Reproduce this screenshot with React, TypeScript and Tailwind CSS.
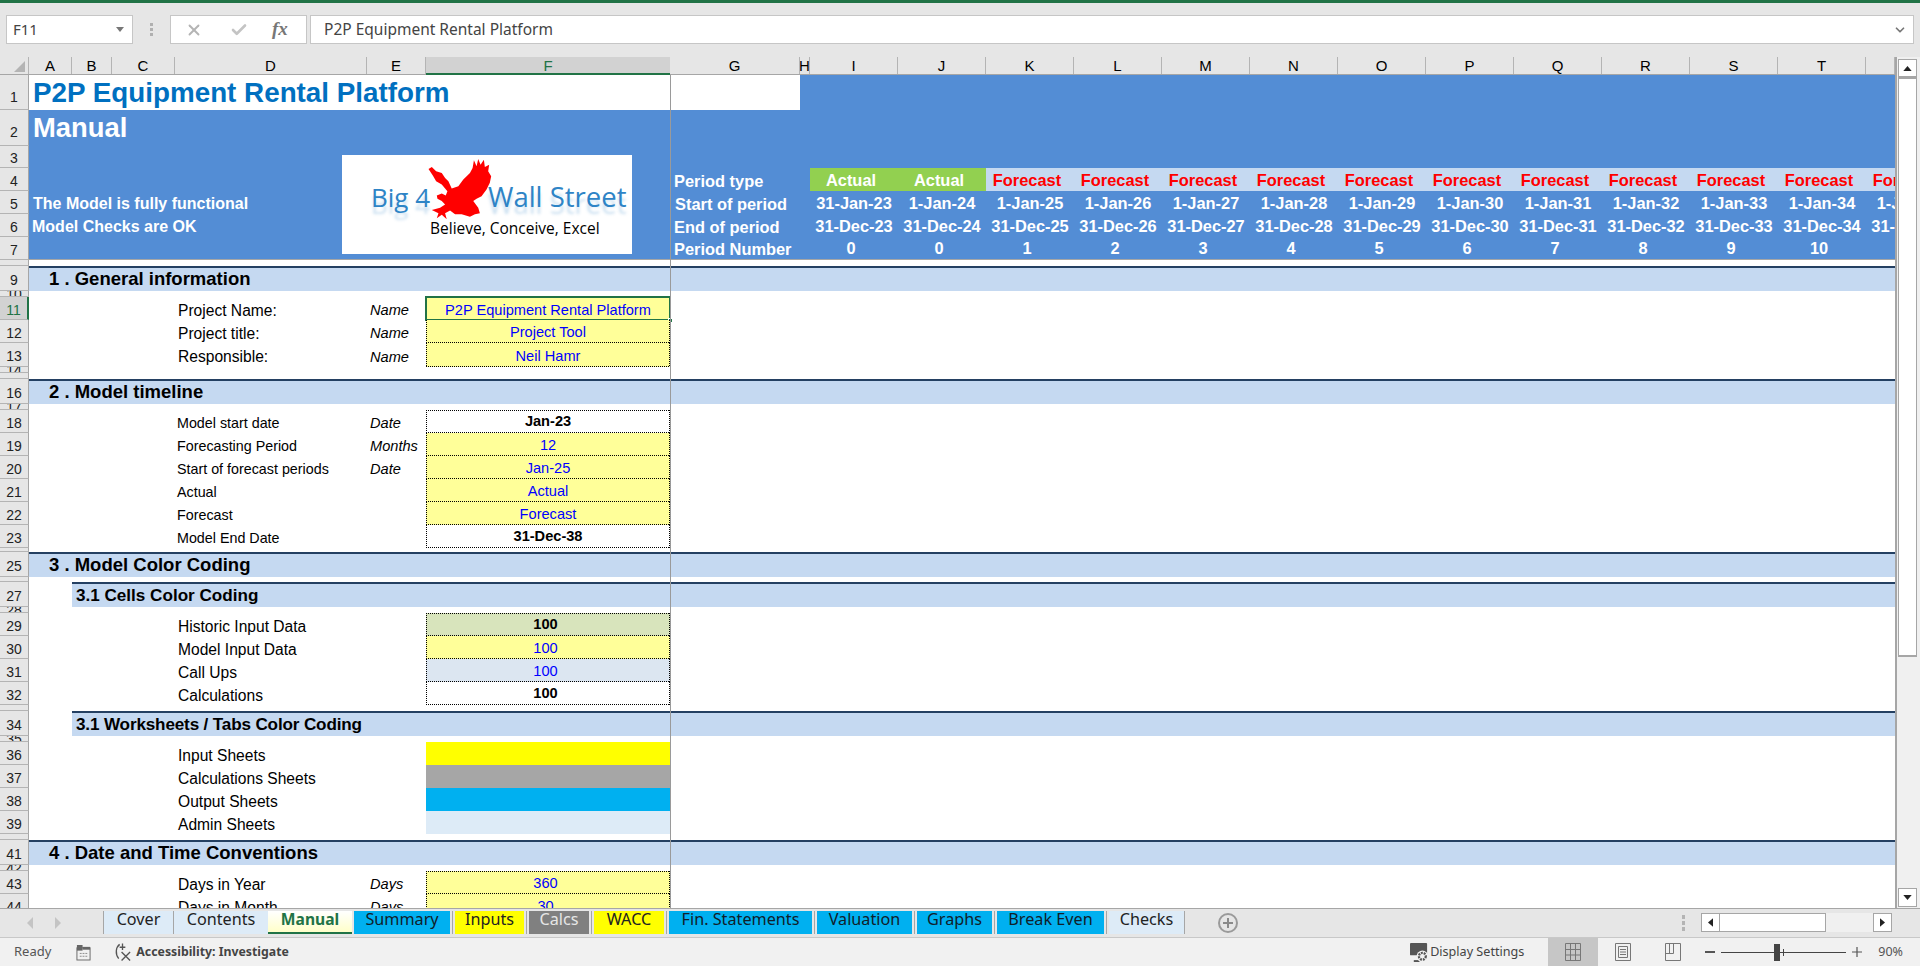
import React from "react";
import { X, Check, ChevronDown } from "lucide-react";

const COLS = "grid grid-rows-1 grid-cols-[43px_40px_63px_192px_59px_244px_130px_10px_repeat(12,88px)_29px] flex-1 min-w-0";
const ARIAL = "font-['Liberation_Sans',Arial,sans-serif]";
const UI = "font-['Noto_Sans',sans-serif]";
const HD = "absolute left-0 right-0 h-px bg-[repeating-linear-gradient(90deg,#000_0_1px,transparent_1px_2px)]";
const VD = "absolute top-0 bottom-0 w-px bg-[repeating-linear-gradient(180deg,#000_0_1px,transparent_1px_2px)]";

function RowHead({ n, sel, hide, pad }: { n: number; sel?: boolean; hide?: boolean; pad: string }) {
  return (
    <div className={`w-[29px] shrink-0 flex items-center justify-center overflow-hidden border-b border-b-[#b4b4b4] text-[14px] leading-none ${pad} ${sel ? "bg-[#d2d2d2] text-[#217346] border-r-2 border-r-[#217346]" : "bg-[#e6e6e6] text-[#222] border-r border-r-[#a6a6a6]"}`}>
      {hide ? null : n}
    </div>
  );
}

function Row({ n, h = "h-[23px]", pad = "pt-[3px]", body = "", sel, hide, children }: { n: number; h?: string; pad?: string; body?: string; sel?: boolean; hide?: boolean; children?: React.ReactNode }) {
  return (
    <div className={`flex shrink-0 ${h}`}>
      <RowHead n={n} sel={sel} hide={hide} pad={pad} />
      <div className={`${COLS} ${body}`}>{children}</div>
    </div>
  );
}

function Section({ n, text }: { n: number; text: string }) {
  return (
    <Row n={n} h="h-[25px]" pad="pt-[3px]" body="border-t-2 border-[#244062] bg-[#c5d9f1]">
      <div className="col-span-full pl-[20px] flex items-center font-bold text-[18.5px] leading-none text-black whitespace-pre">{text}</div>
    </Row>
  );
}

function SubSection({ n, text, cls = "" }: { n: number; text: string; cls?: string }) {
  return (
    <Row n={n} h="h-[25px]" pad="pt-[3px]">
      <div className={`col-start-2 -col-end-1 border-t-2 border-[#244062] bg-[#c5d9f1] pl-[4px] flex items-center font-bold text-[17.1px] leading-none text-black whitespace-nowrap ${cls}`}>{text}</div>
    </Row>
  );
}

function Label({ text, small }: { text: string; small?: boolean }) {
  return (
    <div className={`col-start-4 flex items-center pt-[4px] leading-none whitespace-nowrap text-black ${small ? "text-[14.3px] pl-[2px]" : "text-[15.6px] pl-[3px]"}`}>{text}</div>
  );
}

function Unit({ text }: { text?: string }) {
  return <div className="col-start-5 flex items-center pt-[4px] pl-[3px] italic text-[14.6px] leading-none text-black whitespace-nowrap">{text}</div>;
}

function Val({ text, cls, first }: { text?: string; cls: string; first?: boolean }) {
  return (
    <div className={`col-start-6 relative flex items-center justify-center text-[14.6px] leading-none whitespace-nowrap ${cls}`}>
      {text}
      {first ? <div className={`${HD} top-0`} /> : null}
      <div className={`${HD} bottom-0`} />
      <div className={`${VD} left-0`} />
      <div className={`${VD} right-0`} />
    </div>
  );
}

function Swatch({ cls }: { cls: string }) {
  return <div className={`col-start-6 ${cls}`} />;
}

const starts = ["31-Jan-23", "1-Jan-24", "1-Jan-25", "1-Jan-26", "1-Jan-27", "1-Jan-28", "1-Jan-29", "1-Jan-30", "1-Jan-31", "1-Jan-32", "1-Jan-33", "1-Jan-34", "1-Jan-35"];
const ends = ["31-Dec-23", "31-Dec-24", "31-Dec-25", "31-Dec-26", "31-Dec-27", "31-Dec-28", "31-Dec-29", "31-Dec-30", "31-Dec-31", "31-Dec-32", "31-Dec-33", "31-Dec-34", "31-Dec-35"];
const nums = ["0", "0", "1", "2", "3", "4", "5", "6", "7", "8", "9", "10", ""];

function PeriodCells({ values, cls, colored }: { values: string[]; cls: string; colored?: boolean }) {
  return (
    <>
      {values.map((v, i) => {
        const tone = colored ? (i < 2 ? "bg-[#92d050] text-white" : "bg-[#c5d9f1] text-[#ff0000]") : "text-white";
        return (
          <div key={i} className={`${i === 0 ? "col-start-9" : ""} overflow-hidden flex items-center pt-[1px] ${tone}`}>
            <div className={`w-[88px] shrink-0 text-center leading-none whitespace-nowrap ${cls}`}>{v}</div>
          </div>
        );
      })}
    </>
  );
}

function Eagle() {
  return (
    <svg viewBox="295 58 190 184" className="w-[64px] h-[61px] absolute left-[86px] top-[4px]">
      <polygon
        fill="#ff0000"
        points="295,88 305,82 318,95 335,100 345,115 355,125 365,147 385,140 400,120 420,100 428,85 432,62 440,80 445,58 452,75 462,60 465,82 478,75 475,95 484,110 480,130 470,150 455,170 440,178 430,185 445,205 450,222 435,225 420,232 395,225 375,225 360,213 345,222 350,240 335,226 320,237 325,222 305,212 330,205 345,195 335,185 322,178 320,168 335,162 347,168 352,155 335,135 318,125 308,108"
      />
    </svg>
  );
}

function Logo() {
  const cls = "absolute font-['Open_Sans',sans-serif] text-[#2e84c6] whitespace-nowrap leading-none [text-shadow:0_7px_3px_rgba(46,132,198,0.25)]";
  return (
    <div className="absolute left-[342px] top-[80px] w-[290px] h-[99px] bg-white z-10">
      <span className={`${cls} left-[29px] top-[29px] text-[26px]`}>Big 4</span>
      <Eagle />
      <span className={`${cls} left-[146px] top-[28px] text-[27.5px]`}>Wall Street</span>
      <span className="absolute left-[88px] top-[66px] font-['Open_Sans',sans-serif] text-[15.5px] leading-none text-black whitespace-nowrap">Believe, Conceive, Excel</span>
    </div>
  );
}

function ColHeads() {
  const items: [string, string][] = [
    ["A", "w-[43px]"], ["B", "w-[40px]"], ["C", "w-[63px]"], ["D", "w-[192px]"], ["E", "w-[59px]"], ["F", "w-[244px]"], ["G", "w-[130px]"], ["H", "w-[10px]"],
    ["I", "w-[88px]"], ["J", "w-[88px]"], ["K", "w-[88px]"], ["L", "w-[88px]"], ["M", "w-[88px]"], ["N", "w-[88px]"], ["O", "w-[88px]"], ["P", "w-[88px]"], ["Q", "w-[88px]"], ["R", "w-[88px]"], ["S", "w-[88px]"], ["T", "w-[88px]"], ["", "w-[29px]"],
  ];
  return (
    <div className="flex h-[18px] shrink-0 bg-[#e6e6e6] border-b border-b-[#a6a6a6] text-[15px] leading-none">
      <div className="w-[29px] shrink-0 relative border-r border-r-[#b4b4b4]">
        <svg viewBox="0 0 12 12" className="absolute right-[3px] bottom-[2px] w-[11px] h-[11px]"><polygon points="12,0 12,12 0,12" fill="#b4b4b4" /></svg>
      </div>
      {items.map(([l, w]) => (
        <div key={l + w} className={`${w} shrink-0 flex items-center justify-center overflow-hidden ${l === "F" ? "bg-[#d2d2d2] text-[#217346] border-b-2 border-[#217346] -mb-px" : "border-r border-r-[#b4b4b4] text-black"}`}>{l}</div>
      ))}
    </div>
  );
}

const YEL = "bg-[#ffff99] text-[#0000ff] pt-[2px]";

function Sheet() {
  return (
    <div className={`relative flex-1 min-w-0 flex flex-col overflow-hidden bg-white ${ARIAL}`}>
      <ColHeads />
      <div className="relative flex flex-col">
        <Logo />
        <Row n={1} h="h-[35px]" pad="pt-[9px]" body="bg-[#538dd5]">
          <div className="col-span-7 bg-white pl-[4px] flex items-center font-bold text-[27.8px] leading-none text-[#0070c0] whitespace-nowrap">P2P Equipment Rental Platform</div>
        </Row>
        <Row n={2} h="h-[36px]" pad="pt-[9px]" body="bg-[#538dd5]">
          <div className="col-span-7 pl-[4px] flex items-center font-bold text-[27.4px] leading-none text-white">Manual</div>
        </Row>
        <Row n={3} h="h-[22px]" body="bg-[#538dd5]" />
        <Row n={4} body="bg-[#538dd5]">
          <div className="col-start-7 pl-[4px] pt-[3px] flex items-center font-bold text-[16.4px] leading-none text-white whitespace-nowrap">Period type</div>
          <PeriodCells colored values={["Actual", "Actual", "Forecast", "Forecast", "Forecast", "Forecast", "Forecast", "Forecast", "Forecast", "Forecast", "Forecast", "Forecast", "Forecast"]} cls="pr-[6px] font-bold text-[16.4px]" />
        </Row>
        <Row n={5} body="bg-[#538dd5]">
          <div className="col-span-6 pl-[4px] pt-[3px] flex items-center font-bold text-[16px] leading-none text-white whitespace-nowrap">The Model is fully functional</div>
          <div className="col-start-7 pl-[5px] pt-[3px] flex items-center font-bold text-[16.4px] leading-none text-white whitespace-nowrap">Start of period</div>
          <PeriodCells values={starts} cls="font-bold text-[16.4px]" />
        </Row>
        <Row n={6} body="bg-[#538dd5]">
          <div className="col-span-6 pl-[3px] pt-[3px] flex items-center font-bold text-[16px] leading-none text-white whitespace-nowrap">Model Checks are OK</div>
          <div className="col-start-7 pl-[4px] pt-[3px] flex items-center font-bold text-[16.4px] leading-none text-white whitespace-nowrap">End of period</div>
          <PeriodCells values={ends} cls="font-bold text-[16.4px]" />
        </Row>
        <Row n={7} body="bg-[#538dd5] border-b border-[#a6a6a6]">
          <div className="col-start-7 pl-[4px] pt-[3px] flex items-center font-bold text-[16.4px] leading-none text-white whitespace-nowrap">Period Number</div>
          <PeriodCells values={nums} cls="pr-[6px] font-bold text-[16.4px]" />
        </Row>
        <Row n={8} h="h-[6px]" pad="" hide />
        <Section n={9} text="1 . General information" />
        <Row n={10} h="h-[6px]" pad="" />
        <Row n={11} sel>
          <Label text="Project Name:" />
          <Unit text="Name" />
          <div className="col-start-6 relative flex items-center justify-center bg-[#ffff99] text-[#0000ff] pt-[3px] text-[14.6px] leading-none whitespace-nowrap">
            P2P Equipment Rental Platform
            <div className="absolute -inset-x-px -top-px -bottom-px border-2 border-[#217346]" />
            <div className="absolute -right-[3px] -bottom-[3px] w-[5px] h-[5px] bg-[#217346] border border-white" />
          </div>
        </Row>
        <Row n={12}>
          <Label text="Project title:" />
          <Unit text="Name" />
          <Val text="Project Tool" cls={YEL} />
        </Row>
        <Row n={13} h="h-[24px]">
          <Label text="Responsible:" />
          <Unit text="Name" />
          <Val text="Neil Hamr" cls={YEL} />
        </Row>
        <Row n={14} h="h-[6px]" pad="" />
        <Row n={15} h="h-[6px]" pad="" hide />
        <Section n={16} text="2 . Model timeline" />
        <Row n={17} h="h-[6px]" pad="" />
        <Row n={18}>
          <Label small text="Model start date" />
          <Unit text="Date" />
          <Val first text="Jan-23" cls="font-bold text-black" />
        </Row>
        <Row n={19}>
          <Label small text="Forecasting Period" />
          <Unit text="Months" />
          <Val text="12" cls={YEL} />
        </Row>
        <Row n={20}>
          <Label small text="Start of forecast periods" />
          <Unit text="Date" />
          <Val text="Jan-25" cls={YEL} />
        </Row>
        <Row n={21}>
          <Label small text="Actual" />
          <Val text="Actual" cls={YEL} />
        </Row>
        <Row n={22}>
          <Label small text="Forecast" />
          <Val text="Forecast" cls={YEL} />
        </Row>
        <Row n={23}>
          <Label small text="Model End Date" />
          <Val text="31-Dec-38" cls="font-bold text-black" />
        </Row>
        <Row n={24} h="h-[4px]" pad="" hide />
        <Section n={25} text="3 . Model Color Coding" />
        <Row n={26} h="h-[5px]" pad="" hide />
        <SubSection n={27} text="3.1 Cells Color Coding" />
        <Row n={28} h="h-[6px]" pad="" />
        <Row n={29}>
          <Label text="Historic Input Data" />
          <Val first text="100" cls="bg-[#d8e4bc] font-bold text-black pr-[5px]" />
        </Row>
        <Row n={30}>
          <Label text="Model Input Data" />
          <Val text="100" cls={`${YEL} pr-[5px]`} />
        </Row>
        <Row n={31}>
          <Label text="Call Ups" />
          <Val text="100" cls="bg-[#dce6f1] text-[#0000ff] pt-[2px] pr-[5px]" />
        </Row>
        <Row n={32}>
          <Label text="Calculations" />
          <Val text="100" cls="font-bold text-black pr-[5px]" />
        </Row>
        <Row n={33} h="h-[6px]" pad="" hide />
        <SubSection n={34} text="3.1 Worksheets / Tabs Color Coding" cls="tracking-[-0.15px]" />
        <Row n={35} h="h-[6px]" pad="" />
        <Row n={36}>
          <Label text="Input Sheets" />
          <Swatch cls="bg-[#ffff00]" />
        </Row>
        <Row n={37}>
          <Label text="Calculations Sheets" />
          <Swatch cls="bg-[#a6a6a6]" />
        </Row>
        <Row n={38}>
          <Label text="Output Sheets" />
          <Swatch cls="bg-[#00b0f0]" />
        </Row>
        <Row n={39}>
          <Label text="Admin Sheets" />
          <Swatch cls="bg-[#ddebf7]" />
        </Row>
        <Row n={40} h="h-[6px]" pad="" hide />
        <Section n={41} text="4 . Date and Time Conventions" />
        <Row n={42} h="h-[6px]" pad="" />
        <Row n={43}>
          <Label text="Days in Year" />
          <Unit text="Days" />
          <Val first text="360" cls={`${YEL} pr-[5px]`} />
        </Row>
        <Row n={44}>
          <Label text="Days in Month" />
          <Unit text="Days" />
          <Val text="30" cls={`${YEL} pr-[5px]`} />
        </Row>
      </div>
      <div className="absolute left-[670px] top-[18px] bottom-0 w-px bg-[#9a9a9a] z-20" />
    </div>
  );
}

function VScroll() {
  return (
    <div className="w-[25px] shrink-0 flex flex-col items-start bg-[#f0f0f0] border-l-2 border-[#a6a6a6] pt-[2px] pb-px pl-[1px]">
      <div className="w-[19px] h-[18px] shrink-0 bg-white border border-[#a6a6a6] flex items-center justify-center">
        <svg viewBox="0 0 10 6" className="w-[9px] h-[5px]"><polygon points="5,0 10,6 0,6" fill="#222" /></svg>
      </div>
      <div className="w-[19px] h-[580px] shrink-0 bg-white border-t-2 border-x border-b-2 border-[#a6a6a6]" />
      <div className="flex-1" />
      <div className="w-[19px] h-[19px] shrink-0 bg-white border border-[#a6a6a6] flex items-center justify-center">
        <svg viewBox="0 0 10 6" className="w-[9px] h-[5px]"><polygon points="0,0 10,0 5,6" fill="#222" /></svg>
      </div>
    </div>
  );
}

const tabs: { t: string; cls: string; sep?: string }[] = [
  { t: "Cover", cls: "w-[69px] bg-[#ddebf7] text-[#222]", sep: "mr-0" },
  { t: "Contents", cls: "w-[94px] bg-[#ddebf7] text-[#222]" },
  { t: "Manual", cls: "w-[84px] bg-gradient-to-b from-white to-[#ffffc8] text-[#217346] font-bold !text-[15.6px] border-b-2 border-[#217346] mr-[2px]" },
  { t: "Summary", cls: "w-[96px] bg-[#00b0f0] text-[#10202a]", sep: "mx-[2px]" },
  { t: "Inputs", cls: "w-[69px] bg-[#ffff00] text-[#222]", sep: "mx-[2px]" },
  { t: "Calcs", cls: "w-[60px] bg-[#808080] text-[#e6e6e6]", sep: "mx-[2px]" },
  { t: "WACC", cls: "w-[70px] bg-[#ffff00] text-[#222]", sep: "mx-[2px]" },
  { t: "Fin. Statements", cls: "w-[143px] bg-[#00b0f0] text-[#10202a]", sep: "mx-[2px]" },
  { t: "Valuation", cls: "w-[95px] bg-[#00b0f0] text-[#10202a]", sep: "mx-[2px]" },
  { t: "Graphs", cls: "w-[75px] bg-[#00b0f0] text-[#10202a]", sep: "mx-[2px]" },
  { t: "Break Even", cls: "w-[107px] bg-[#00b0f0] text-[#10202a]", sep: "mx-[2px]" },
  { t: "Checks", cls: "w-[75px] bg-[#ddebf7] text-[#222]", sep: "mr-0" },
];

function TabBar() {
  return (
    <div className={`h-[29px] shrink-0 flex bg-[#e6e6e6] border-t border-[#a6a6a6] ${UI}`}>
      <div className="w-[103px] shrink-0 flex items-center gap-[22px] pl-[27px]">
        <svg viewBox="0 0 6 12" className="w-[6px] h-[12px]"><polygon points="6,0 6,12 0,6" fill="#c4c4c4" /></svg>
        <svg viewBox="0 0 6 12" className="w-[6px] h-[12px]"><polygon points="0,0 0,12 6,6" fill="#c4c4c4" /></svg>
      </div>
      <div className="w-px h-[23px] mt-[2px] bg-[#a6a6a6]" />
      <div className="flex items-start pt-[2px]">
        {tabs.map((tab) => (
          <React.Fragment key={tab.t}>
            <div className={`h-[23px] flex justify-center text-[16.2px] leading-[16px] whitespace-nowrap ${tab.cls}`}>{tab.t}</div>
            {tab.sep ? <div className={`w-px h-[23px] bg-[#a6a6a6] ${tab.sep}`} /> : null}
          </React.Fragment>
        ))}
      </div>
      <div className="ml-[33px] mt-[4px] w-[20px] h-[20px] rounded-full border-2 border-[#9a9a9a] flex items-center justify-center">
        <svg viewBox="0 0 10 10" className="w-[10px] h-[10px]"><path d="M5 0V10M0 5H10" stroke="#8a8a8a" strokeWidth="2" /></svg>
      </div>
      <div className="ml-auto flex items-center pr-[28px] pb-[1px]">
        <div className="flex flex-col gap-[2px] mr-[16px]">
          <div className="w-[3px] h-[4px] bg-[#b4b4b4]" /><div className="w-[3px] h-[4px] bg-[#b4b4b4]" /><div className="w-[3px] h-[4px] bg-[#b4b4b4]" />
        </div>
        <div className="w-[19px] h-[19px] bg-white border border-[#a6a6a6] flex items-center justify-center">
          <svg viewBox="0 0 6 10" className="w-[5px] h-[9px]"><polygon points="6,0 6,10 0,5" fill="#222" /></svg>
        </div>
        <div className="w-[106px] h-[19px] bg-white border-y border-r border-[#a6a6a6]" />
        <div className="w-[47px] h-[19px] bg-[#f0f0f0]" />
        <div className="w-[19px] h-[19px] bg-white border border-[#a6a6a6] flex items-center justify-center">
          <svg viewBox="0 0 6 10" className="w-[5px] h-[9px]"><polygon points="0,0 0,10 6,5" fill="#222" /></svg>
        </div>
      </div>
    </div>
  );
}

function StatusBar() {
  return (
    <div className={`h-[29px] shrink-0 flex items-center bg-[#f1f1f1] border-t border-[#c8c8c8] text-[#555] ${UI}`}>
      <span className="ml-[14px] text-[13px]">Ready</span>
      <svg viewBox="0 0 16 18" className="ml-[25px] w-[15px] h-[17px]">
        <rect x="1" y="4" width="14" height="13" fill="none" stroke="#666" />
        <rect x="1" y="1" width="6" height="6" fill="#666" />
        <rect x="7" y="3" width="8" height="3" fill="#666" />
        <path d="M4 10h8M4 13h8" stroke="#888" strokeDasharray="2 1" />
      </svg>
      <svg viewBox="0 0 20 20" className="ml-[22px] w-[19px] h-[20px]" fill="none" stroke="#555" strokeWidth="1.4">
        <path d="M7 2C3 5 2 12 6 17" />
        <path d="M10 1v7M7 5h6" />
        <path d="M9 10l9 9M18 10l-9 9" />
      </svg>
      <span className="ml-[4px] text-[12.3px] font-bold text-[#444]">Accessibility: Investigate</span>
      <div className="ml-auto flex items-center h-full">
        <svg viewBox="0 0 20 22" className="w-[19px] h-[21px]">
          <rect x="0" y="1" width="18" height="13" rx="1" fill="#555" />
          <path d="M4 20h6" stroke="#555" strokeWidth="2" />
          <circle cx="13" cy="15" r="6" fill="#f1f1f1" />
          <circle cx="13" cy="15" r="3.6" fill="none" stroke="#555" strokeWidth="2.4" strokeDasharray="2 1" />
        </svg>
        <span className="ml-[1px] mr-[24px] text-[12.6px] text-[#444]">Display Settings</span>
        <div className="w-[50px] h-full bg-[#c6c6c6] flex items-center justify-center">
          <svg viewBox="0 0 16 18" className="w-[16px] h-[18px]" fill="none" stroke="#777"><path d="M.5.5h15v17H.5zM5.5.5v17M10.5.5v17M.5 6.5h15M.5 12h15" /></svg>
        </div>
        <div className="w-[49px] flex items-center justify-center">
          <svg viewBox="0 0 16 18" className="w-[16px] h-[18px]" fill="none" stroke="#777"><path d="M.5.5h15v17H.5z" /><path d="M3.5 3.5h9v11h-9zM5 6.5h6M5 9h6M5 11.5h6" /></svg>
        </div>
        <div className="w-[51px] flex items-center justify-center">
          <svg viewBox="0 0 16 18" className="w-[16px] h-[18px]" fill="none" stroke="#777"><path d="M.5.5h15v17H.5zM.5 10.5h8V.5M4.5.5v10" /></svg>
        </div>
        <div className="ml-[7px] w-[10px] h-[2px] bg-[#555]" />
        <div className="relative ml-[6px] w-[125px] h-px bg-[#444]">
          <div className="absolute left-[53px] -top-[8px] w-[6px] h-[17px] bg-[#444]" />
          <div className="absolute left-[62px] -top-[3px] w-px h-[7px] bg-[#444]" />
        </div>
        <svg viewBox="0 0 10 10" className="ml-[6px] w-[10px] h-[10px]"><path d="M5 0V10M0 5H10" stroke="#555" strokeWidth="1.2" /></svg>
        <span className="ml-[16px] mr-[17px] text-[12.5px] text-[#555]">90%</span>
      </div>
    </div>
  );
}

function FormulaBar() {
  return (
    <div className={`h-[54px] shrink-0 flex items-start pt-[12px] bg-[#e6e6e6] ${UI}`}>
      <div className="ml-[6px] w-[127px] h-[29px] bg-white border border-[#c6c6c6] flex items-center text-[15px] text-[#444] pl-[6px] pr-[8px]">
        <span className="flex-1">F11</span>
        <svg viewBox="0 0 8 5" className="w-[8px] h-[5px]"><polygon points="0,0 8,0 4,5" fill="#777" /></svg>
      </div>
      <div className="ml-[17px] mt-[8px] flex flex-col gap-[2px]">
        <div className="w-[3px] h-[3px] bg-[#b0b0b0]" /><div className="w-[3px] h-[3px] bg-[#b0b0b0]" /><div className="w-[3px] h-[3px] bg-[#b0b0b0]" />
      </div>
      <div className="ml-[17px] w-[137px] h-[29px] bg-white border border-[#c6c6c6] flex items-center pl-[14px]">
        <X className="w-[18px] h-[18px] text-[#b4b4b4]" strokeWidth={2.5} />
        <Check className="ml-[27px] w-[18px] h-[18px] text-[#c4c4c4]" strokeWidth={3.5} />
        <span className="ml-[24px] font-['Liberation_Serif',serif] italic font-bold text-[19px] text-[#777]">fx</span>
      </div>
      <div className="ml-[3px] w-[1604px] h-[29px] bg-white border border-[#c6c6c6] flex items-center pl-[13px] text-[15.5px] text-[#444]">
        <span className="flex-1">P2P Equipment Rental Platform</span>
        <ChevronDown className="w-[14px] h-[14px] text-[#777] mr-[6px]" strokeWidth={3} />
      </div>
    </div>
  );
}

export default function App() {
  return (
    <div className="w-[1920px] h-[966px] flex flex-col overflow-hidden bg-[#e6e6e6]">
      <div className="h-[3px] shrink-0 bg-[#217346]" />
      <FormulaBar />
      <div className="h-[851px] shrink-0 flex overflow-hidden">
        <Sheet />
        <VScroll />
      </div>
      <TabBar />
      <StatusBar />
    </div>
  );
}
